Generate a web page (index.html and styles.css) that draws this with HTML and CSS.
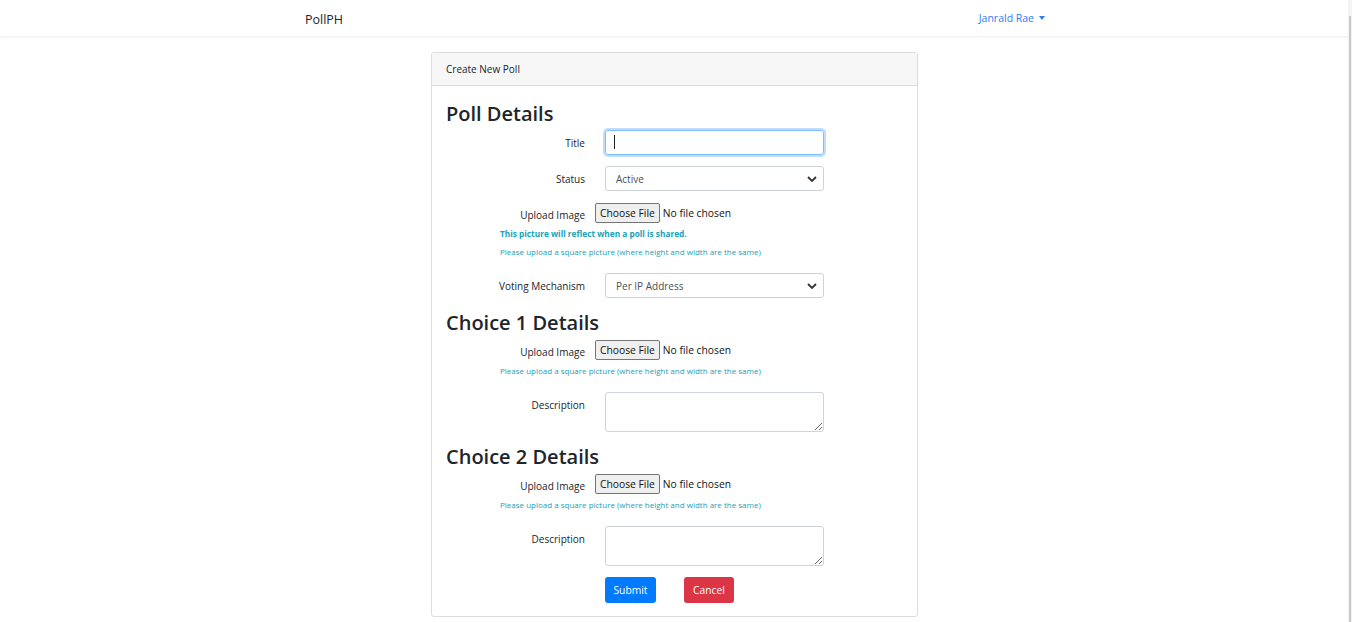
FILE: index.html
```html
<!DOCTYPE html>
<html lang="en">
<head>
<meta charset="utf-8">
<title>PollPH - Create New Poll</title>
<link rel="stylesheet" href="styles.css">
</head>
<body>
<nav class="navbar">
  <div class="nav-inner">
    <a class="brand">PollPH</a>
    <a class="user">Janrald Rae <span class="caret"></span></a>
  </div>
</nav>

<main class="main">
  <section class="card">
    <header class="card-header">Create New Poll</header>
    <div class="card-body">
      <h2 class="section-title">Poll Details</h2>

      <div class="form-row">
        <label class="label">Title</label>
        <div class="field input focused"><span class="cursor"></span></div>
      </div>

      <div class="form-row">
        <label class="label">Status</label>
        <div class="field input select">Active
          <svg class="chev" viewBox="0 0 10 6" width="10" height="6"><path d="M1 1l4 4 4-4" fill="none" stroke="#333" stroke-width="1.8"/></svg>
        </div>
      </div>

      <div class="upload-row">
        <label class="label">Upload Image</label>
        <div class="file"><span class="file-btn">Choose File</span><span class="file-name">No file chosen</span></div>
      </div>
      <p class="note note-bold">This picture will reflect when a poll is shared.</p>
      <p class="note note-gap">Please upload a square picture (where height and width are the same)</p>

      <div class="form-row">
        <label class="label">Voting Mechanism</label>
        <div class="field input select">Per IP Address
          <svg class="chev" viewBox="0 0 10 6" width="10" height="6"><path d="M1 1l4 4 4-4" fill="none" stroke="#333" stroke-width="1.8"/></svg>
        </div>
      </div>

      <h2 class="section-title">Choice 1 Details</h2>
      <div class="upload-row">
        <label class="label">Upload Image</label>
        <div class="file"><span class="file-btn">Choose File</span><span class="file-name">No file chosen</span></div>
      </div>
      <p class="note note-tight">Please upload a square picture (where height and width are the same)</p>
      <div class="form-row">
        <label class="label">Description</label>
        <textarea class="field textarea"></textarea>
      </div>

      <h2 class="section-title">Choice 2 Details</h2>
      <div class="upload-row">
        <label class="label">Upload Image</label>
        <div class="file"><span class="file-btn">Choose File</span><span class="file-name">No file chosen</span></div>
      </div>
      <p class="note note-tight">Please upload a square picture (where height and width are the same)</p>
      <div class="form-row">
        <label class="label">Description</label>
        <textarea class="field textarea"></textarea>
      </div>

      <div class="actions">
        <button class="btn btn-primary">Submit</button>
        <button class="btn btn-danger">Cancel</button>
      </div>
    </div>
  </section>
</main>
<div class="scrollbar"><div class="thumb"></div></div>
</body>
</html>
```

FILE: styles.css
```css
* { box-sizing: border-box; }
html, body { margin: 0; padding: 0; }
body {
  font-family: "Open Sans", "Noto Sans", sans-serif;
  font-size: 10px;
  color: #212529;
  background: #fff;
}

.navbar {
  height: 36px;
  background: #fff;
  box-shadow: 0 1px 3px rgba(0,0,0,0.08);
  padding-right: 2px;
}
.nav-inner {
  width: 740px;
  margin: 0 auto;
  height: 36px;
  display: flex;
  align-items: center;
  justify-content: space-between;
}
.brand {
  font-size: 12.5px;
  color: #212529;
  padding-top: 2px;
}
.user {
  font-size: 10.5px;
  color: #2f7cf6;
  display: flex;
  align-items: center;
  gap: 5px;
}
.caret {
  width: 0; height: 0;
  border-left: 3.5px solid transparent;
  border-right: 3.5px solid transparent;
  border-top: 4px solid #2f7cf6;
}

.main {
  padding-top: 16px;
  display: flex;
  justify-content: center;
  padding-right: 3px;
}
.card {
  width: 487px;
  border: 1px solid #dcdcdc;
  border-radius: 3px;
  background: #fff;
}
.card-header {
  height: 33px;
  background: #f7f7f7;
  border-bottom: 1px solid #dcdcdc;
  padding: 0 14px;
  line-height: 32px;
  font-size: 10px;
}
.card-body {
  padding: 14px 14px 13px 14px;
}
.section-title {
  margin: 0 0 4px 0;
  padding-top: 1px;
  font-size: 20px;
  font-weight: 600;
  line-height: 25px;
  color: #212529;
}
.form-row {
  display: flex;
  align-items: flex-start;
  margin-bottom: 11px;
}
.label {
  width: 139px;
  flex: none;
  text-align: right;
  padding-top: 5px;
  line-height: 16px;
  margin-right: 20px;
}
.field {
  width: 219px;
  flex: none;
}
.input {
  height: 25px;
  border: 1px solid #ced4da;
  border-radius: 3px;
  padding: 1px 10px 0;
  line-height: 23px;
  position: relative;
}
.focused {
  border-color: #80bdff;
  box-shadow: 0 0 0 2px rgba(0,123,255,0.25);
  padding-top: 0;
}
.cursor {
  display: inline-block;
  width: 1px;
  height: 14px;
  background: #222;
  vertical-align: middle;
  margin-top: -2px;
  margin-left: -2px;
}
.select { color: #495057; }
.chev {
  position: absolute;
  right: 6px;
  top: 9px;
}
.upload-row {
  display: flex;
  align-items: flex-start;
  height: 24px;
}
.upload-row .label { margin-right: 10px; }
.file {
  display: flex;
  align-items: center;
  margin-top: 1px;
  height: 20px;
  font-size: 10.3px;
}
.file-btn {
  height: 20px;
  line-height: 18px;
  padding: 0 4px;
  border: 1px solid #767676;
  border-radius: 2px;
  background: #efefef;
  color: #111;
  margin-right: 3px;
}
.file-name { color: #111; }
.note {
  margin: 0 0 14px 54px;
  line-height: 14px;
  font-size: 8px;
  color: #17a2b8;
}
.note-bold {
  font-weight: 700;
  font-size: 8.3px;
  margin-bottom: 0;
  padding-top: 1px;
}
.note-gap { margin-top: 4px; }
.note-tight { margin-top: 1px; }
.textarea {
  display: block;
  height: 40px;
  border: 1px solid #ced4da;
  border-radius: 3px;
  font-family: inherit;
  margin: 0;
  resize: vertical;
}
.actions {
  display: flex;
  gap: 28px;
  padding-left: 159px;
}
.btn {
  height: 26px;
  border: none;
  border-radius: 3px;
  color: #fff;
  font-family: inherit;
  font-size: 10.3px;
  padding: 0 8px;
  width: 51px;
}
.btn-primary { background: #007bff; }
.btn-danger { background: #dc3545; width: 50px; }

.scrollbar {
  position: fixed;
  right: 0;
  top: 0;
  width: 4px;
  height: 100%;
  background: #f3f3f3;
}
.thumb {
  position: absolute;
  right: 1px;
  top: 16px;
  width: 2px;
  bottom: 0;
  background: #c8c8c8;
}
```
